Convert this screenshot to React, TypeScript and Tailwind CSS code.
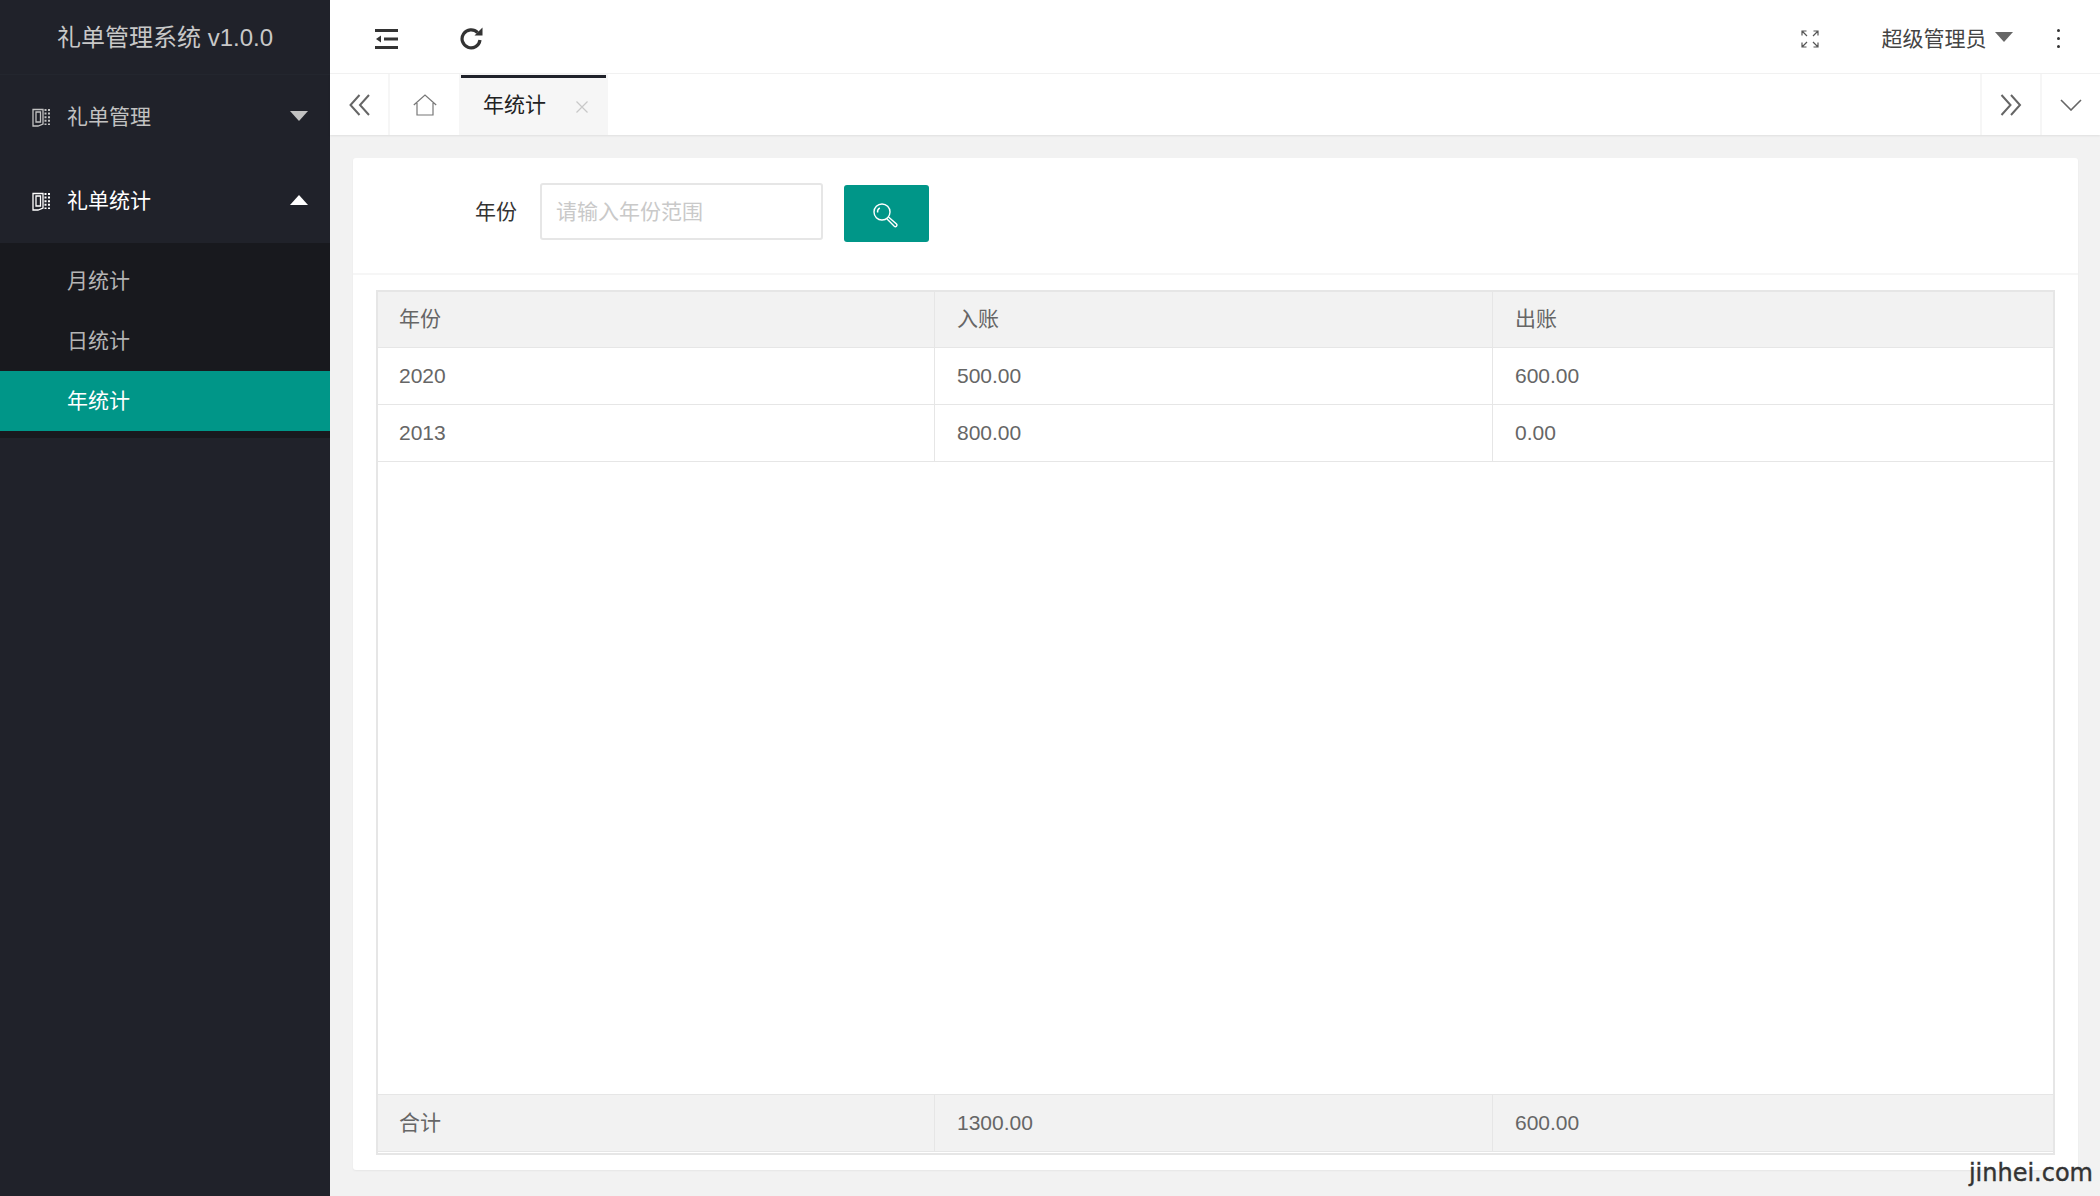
import React from 'react';

const FONT = "font-['Liberation_Sans','Noto_Sans_CJK_SC',sans-serif]";

function BookIcon() {
  return (
    <svg width="19" height="20" viewBox="0 0 19 20" fill="none" stroke="currentColor" strokeWidth="1.3" className="shrink-0">
      <path d="M1 2.5 H11 V17 L6 19 H1 Z" />
      <path d="M4 5 H8.5 V15 H4 Z" />
      <path d="M13.5 2 V18 M17 2 V18" strokeWidth="2" strokeDasharray="2 1.6" />
    </svg>
  );
}

function Caret({ up, className }: { up?: boolean; className: string }) {
  return (
    <svg width="18" height="10" viewBox="0 0 18 10" className={className}>
      <path d={up ? 'M9 0 L18 10 H0 Z' : 'M0 0 H18 L9 10 Z'} fill="currentColor" />
    </svg>
  );
}

function NavItem({ label, open }: { label: string; open?: boolean }) {
  return (
    <div className={`flex h-[84px] items-center pl-8 pr-[22px] ${open ? 'text-white' : 'text-[#c2c2c2]'}`}>
      <BookIcon />
      <span className="ml-4 flex-1 text-[21px]">{label}</span>
      <Caret up={open} className="mb-0.5" />
    </div>
  );
}

function SubItem({ label, active }: { label: string; active?: boolean }) {
  return (
    <div className={`flex h-[60px] items-center pl-[67px] text-[21px] ${active ? 'bg-[#009688] text-white' : 'text-[#b4b4b4]'}`}>
      {label}
    </div>
  );
}

function Sidebar() {
  return (
    <aside className="flex w-[330px] shrink-0 flex-col bg-[#20222a]">
      <div className="flex h-[75px] items-center justify-center border-b border-[#23262e] pt-px text-[24px] text-[#c8c8c8]">
        礼单管理系统 v1.0.0
      </div>
      <NavItem label="礼单管理" />
      <NavItem label="礼单统计" open />
      <div className="bg-[#18191e] py-[7.5px]">
        <SubItem label="月统计" />
        <SubItem label="日统计" />
        <SubItem label="年统计" active />
      </div>
    </aside>
  );
}

function Header() {
  return (
    <header className="flex h-[74px] shrink-0 items-center border-b border-[#f2f2f2] bg-white pt-1 text-[#333]">
      <svg width="24" height="20" viewBox="0 0 24 20" className="ml-[45px]" fill="#333">
        <rect x="0" y="0" width="23" height="3" />
        <rect x="0" y="17" width="23" height="3" />
        <rect x="9" y="8.5" width="14" height="3" />
        <path d="M1 10 L6 6.5 V13.5 Z" />
      </svg>
      <svg width="24" height="24" viewBox="0 0 24 24" className="ml-[61px]" fill="none" stroke="#333" strokeWidth="3.2">
        <path d="M20 13 A9 9 0 1 1 17.6 5.6" />
        <path d="M14.5 8.5 H22.5 V0.5 Z" fill="#333" stroke="none" />
      </svg>
      <svg width="18" height="18" viewBox="0 0 18 18" className="ml-auto" fill="none" stroke="#555" strokeWidth="1.2">
        <path d="M1 5.5 V1 H5.5 M1 1 L6 6 M12.5 1 H17 V5.5 M17 1 L12 6 M1 12.5 V17 H5.5 M1 17 L6 12 M12.5 17 H17 V12.5 M17 17 L12 12" />
      </svg>
      <span className="ml-[63px] text-[21px] leading-none text-[#444]">超级管理员</span>
      <Caret className="ml-2 mb-1 text-[#666]" />
      <div className="ml-11 mr-10 flex flex-col gap-[4.5px]">
        <span className="size-[3.5px] rounded-full bg-[#333]" />
        <span className="size-[3.5px] rounded-full bg-[#333]" />
        <span className="size-[3.5px] rounded-full bg-[#333]" />
      </div>
    </header>
  );
}

function TabBar() {
  return (
    <div className="z-10 flex h-[61px] shrink-0 items-stretch bg-white shadow-[0_1px_2px_rgba(0,0,0,0.08)]">
      <div className="flex w-[60px] items-center justify-center border-r-2 border-[#f6f6f6] pl-0.5">
        <svg width="22" height="22" viewBox="0 0 22 22" fill="none" stroke="#666" strokeWidth="2">
          <path d="M10.5 1 L1.5 11 L10.5 21 M20 1 L11 11 L20 21" />
        </svg>
      </div>
      <div className="flex w-[69px] items-center justify-center">
        <svg width="24" height="22" viewBox="0 0 24 22" fill="none" stroke="#777" strokeWidth="1.2">
          <path d="M0.8 11 L12 1 L23.2 11 M4 9 V21 H20 V9" />
        </svg>
      </div>
      <div className="relative flex w-[149px] items-center bg-[#f6f6f6] pl-6 text-[21px] text-[#222]">
        <span className="absolute left-[2px] right-[2px] top-px h-[3px] bg-[#20222a]" />
        <span>年统计</span>
        <svg width="12" height="12" viewBox="0 0 12 12" className="ml-[30px] mt-1" stroke="#c8c8c8" strokeWidth="1.2">
          <path d="M0.5 0.5 L11.5 11.5 M11.5 0.5 L0.5 11.5" />
        </svg>
      </div>
      <div className="flex-1" />
      <div className="flex w-[60px] items-center justify-center border-l-2 border-[#f6f6f6]">
        <svg width="22" height="22" viewBox="0 0 22 22" fill="none" stroke="#666" strokeWidth="2">
          <path d="M1.5 1 L10.5 11 L1.5 21 M11 1 L20 11 L11 21" />
        </svg>
      </div>
      <div className="flex w-[60px] items-center justify-center border-l-2 border-[#f6f6f6]">
        <svg width="22" height="12" viewBox="0 0 22 12" fill="none" stroke="#666" strokeWidth="1.6">
          <path d="M1 1 L11 11 L21 1" />
        </svg>
      </div>
    </div>
  );
}

const ROWS = [
  ['2020', '500.00', '600.00'],
  ['2013', '800.00', '0.00'],
];

const COL = 'flex h-full items-center border-r border-[#e6e6e6] pl-[21px] last:border-r-0 [&:not(:first-child)]:pl-[22px]';
const GRID = 'grid grid-cols-[557px_558px_1fr]';

function StatTable() {
  return (
    <div className="mx-[23px] mt-[15px] flex h-[865px] flex-col border-2 border-[#e6e6e6] text-[21px] text-[#666]">
      <div className={`${GRID} h-[56px] shrink-0 border-b border-[#e6e6e6] bg-[#f2f2f2]`}>
        <div className={`${COL} pb-0.5`}>年份</div>
        <div className={`${COL} pb-0.5`}>入账</div>
        <div className={`${COL} pb-0.5`}>出账</div>
      </div>
      {ROWS.map((row) => (
        <div key={row[0]} className={`${GRID} h-[57px] shrink-0 border-b border-[#e6e6e6]`}>
          {row.map((cell, i) => (
            <div key={i} className={COL}>{cell}</div>
          ))}
        </div>
      ))}
      <div className="flex-1" />
      <div className={`${GRID} mb-px h-[58px] shrink-0 border-y border-[#e6e6e6] bg-[#f2f2f2]`}>
        <div className={COL}>合计</div>
        <div className={COL}>1300.00</div>
        <div className={COL}>600.00</div>
      </div>
    </div>
  );
}

function Card() {
  return (
    <div className="ml-[23px] mr-[22px] mt-[23px] h-[1012px] rounded-[3px] bg-white shadow-[0_1px_2px_rgba(0,0,0,0.05)]">
      <div className="flex h-[117px] items-start border-b-2 border-[#f6f6f6] pl-[122px] pt-[25px]">
        <label className="mt-[18px] text-[21px] leading-none text-[#333]">年份</label>
        <input
          placeholder="请输入年份范围"
          className="ml-[23px] h-[57px] w-[283px] rounded-[3px] border-2 border-[#e6e6e6] bg-white pl-[14px] text-[21px] outline-none placeholder:text-[#c9c9c9]"
        />
        <button className="ml-[21px] mt-[2px] flex h-[57px] w-[85px] items-center justify-center rounded-[3px] bg-[#009688]">
          <svg width="25" height="25" viewBox="0 0 25 25" fill="none" stroke="white" strokeWidth="1.4" className="ml-[-2px] mt-[3px]">
            <circle cx="9" cy="9" r="8" />
            <path d="M4.6 9.5 A4.6 4.6 0 0 1 6.8 4.8" />
            <path d="M15.5 14 L23.5 21 A1.6 1.6 0 0 1 21.3 23.3 L13.8 15.8" />
          </svg>
        </button>
      </div>
      <StatTable />
    </div>
  );
}

export default function App() {
  return (
    <div className={`relative flex h-[1196px] w-[2100px] overflow-hidden bg-[#f2f2f2] ${FONT}`}>
      <Sidebar />
      <main className="flex min-w-0 flex-1 flex-col">
        <Header />
        <TabBar />
        <Card />
      </main>
      <span className="absolute bottom-[11px] right-[7px] font-['DejaVu_Sans',sans-serif] text-[24px] leading-none text-[#333] [-webkit-text-stroke:0.4px_#333]">
        jinhei.com
      </span>
    </div>
  );
}
